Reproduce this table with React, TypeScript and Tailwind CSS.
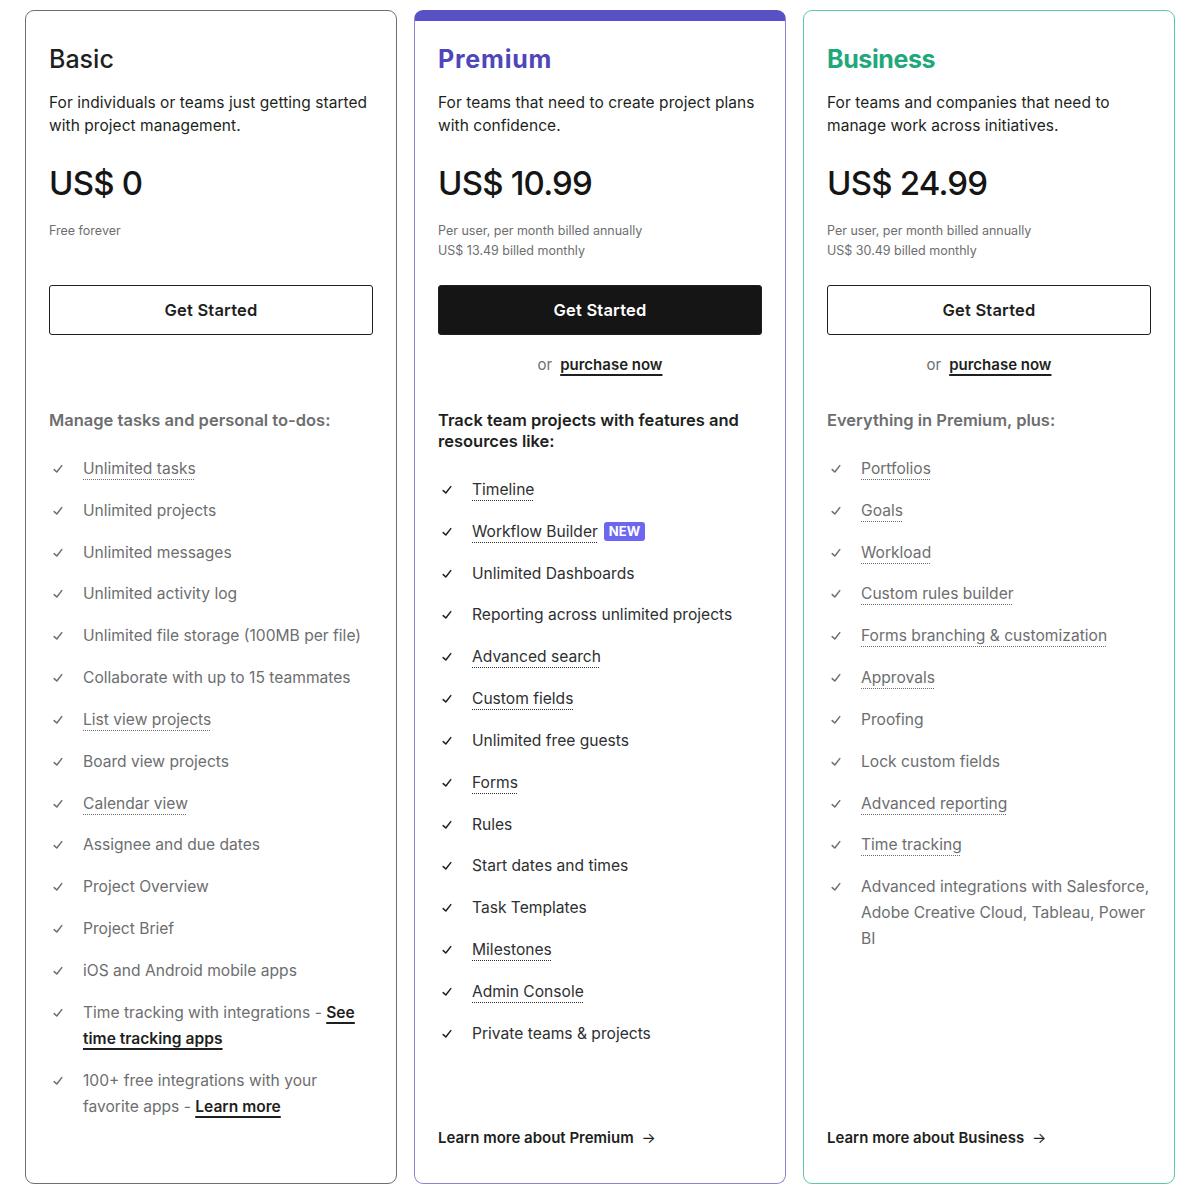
import React from "react";

type Feature = {
    text: string;
    dotted?: boolean;
    badge?: string;
    link?: string;
};

type Plan = {
    name: string;
    nameColor: string;
    description: string;
    price: string;
    notes: string[];
    primary?: boolean;
    purchase?: boolean;
    heading: string;
    features: Feature[];
    learnMore?: string;
    cardClass: string;
    textClass: string;
    headingClass: string;
};

const plans: Plan[] = [
    {
        name: "Basic",
        nameColor: "text-[#1e1f21] font-medium",
        description: "For individuals or teams just getting started with project management.",
        price: "US$ 0",
        notes: ["Free forever"],
        heading: "Manage tasks and personal to-dos:",
        cardClass: "border-[1.5px] border-[#6f6f6f] pt-[32px]",
        textClass: "text-[#6d6e6f]",
        headingClass: "text-[#6d6e6f]",
        features: [
            { text: "Unlimited tasks", dotted: true },
            { text: "Unlimited projects" },
            { text: "Unlimited messages" },
            { text: "Unlimited activity log" },
            { text: "Unlimited file storage (100MB per file)" },
            { text: "Collaborate with up to 15 teammates" },
            { text: "List view projects", dotted: true },
            { text: "Board view projects" },
            { text: "Calendar view", dotted: true },
            { text: "Assignee and due dates" },
            { text: "Project Overview" },
            { text: "Project Brief" },
            { text: "iOS and Android mobile apps" },
            { text: "Time tracking with integrations - ", link: "See time tracking apps" },
            { text: "100+ free integrations with your favorite apps - ", link: "Learn more" },
        ],
    },
    {
        name: "Premium",
        nameColor: "text-[#4f46ba] font-bold tracking-[0.8px]",
        description: "For teams that need to create project plans with confidence.",
        price: "US$ 10.99",
        notes: ["Per user, per month billed annually", "US$ 13.49 billed monthly"],
        primary: true,
        purchase: true,
        heading: "Track team projects with features and resources like:",
        learnMore: "Learn more about Premium",
        cardClass: "border-[1.5px] border-[#8a86d2] border-t-[11px] border-t-[#5a50c6] pt-[22px]",
        textClass: "text-[#2e2f31]",
        headingClass: "text-[#1e1f21]",
        features: [
            { text: "Timeline", dotted: true },
            { text: "Workflow Builder", dotted: true, badge: "NEW" },
            { text: "Unlimited Dashboards" },
            { text: "Reporting across unlimited projects" },
            { text: "Advanced search", dotted: true },
            { text: "Custom fields", dotted: true },
            { text: "Unlimited free guests" },
            { text: "Forms", dotted: true },
            { text: "Rules" },
            { text: "Start dates and times" },
            { text: "Task Templates" },
            { text: "Milestones", dotted: true },
            { text: "Admin Console", dotted: true },
            { text: "Private teams & projects" },
        ],
    },
    {
        name: "Business",
        nameColor: "text-[#1ea87b] font-bold tracking-[-0.4px]",
        description: "For teams and companies that need to manage work across initiatives.",
        price: "US$ 24.99",
        notes: ["Per user, per month billed annually", "US$ 30.49 billed monthly"],
        purchase: true,
        heading: "Everything in Premium, plus:",
        learnMore: "Learn more about Business",
        cardClass: "border-[1.5px] border-[#5ec8a6] pt-[32px]",
        textClass: "text-[#6d6e6f]",
        headingClass: "text-[#6d6e6f]",
        features: [
            { text: "Portfolios", dotted: true },
            { text: "Goals", dotted: true },
            { text: "Workload", dotted: true },
            { text: "Custom rules builder", dotted: true },
            { text: "Forms branching & customization", dotted: true },
            { text: "Approvals", dotted: true },
            { text: "Proofing" },
            { text: "Lock custom fields" },
            { text: "Advanced reporting", dotted: true },
            { text: "Time tracking", dotted: true },
            { text: "Advanced integrations with Salesforce, Adobe Creative Cloud, Tableau, Power BI" },
        ],
    },
];

const Check = ({ dark }: { dark?: boolean }) => (
    <svg width="10" height="10" viewBox="0 0 10 10" className="mt-[8px] shrink-0">
        <path
            d="M1.2 5.6 L3.8 8 L8.8 1.6"
            fill="none"
            stroke={dark ? "#1e1f21" : "#6d6e6f"}
            strokeWidth="1.5"
            strokeLinecap="round"
            strokeLinejoin="round"
        />
    </svg>
);

const PlanCard = ({ plan }: { plan: Plan }) => {
    return (
        <div className={`w-[372px] h-[1174px] rounded-[9px] bg-white flex flex-col px-[23px] pb-[34px] ${plan.cardClass}`}>
            <h2 className={`text-[25px] leading-[32px] ${plan.nameColor}`}>{plan.name}</h2>
            <p className="mt-[16px] text-[15.5px] leading-[23px] text-[#1e1f21] tracking-[0.05px]">{plan.description}</p>
            <div className="mt-[24px] text-[33px] leading-[44px] font-medium text-[#151515] tracking-[-0.8px]">
                {plan.price}
            </div>
            <div className="mt-[16px] h-[40px] text-[12.5px] leading-[20px] text-[#6d6e6f]">
                {plan.notes.map((n) => (
                    <div key={n}>{n}</div>
                ))}
            </div>
            <button
                className={`mt-[24px] h-[50px] w-full rounded-[3px] border-[1.5px] border-[#1e1f21] text-[16.5px] font-semibold tracking-[0.2px] ${
                    plan.primary ? "bg-[#151515] text-white" : "bg-white text-[#1e1f21]"
                }`}
            >
                Get Started
            </button>
            <div className="mt-[18px] h-[24px] text-[15px] leading-[24px] text-center">
                {plan.purchase && (
                    <>
                        <span className="text-[#6d6e6f] mr-2">or</span>
                        <span className="font-semibold text-[#1e1f21] underline decoration-[1.5px] underline-offset-[4px]">
                            purchase now
                        </span>
                    </>
                )}
            </div>
            <h3 className={`mt-[33px] text-[16.5px] leading-[21px] font-semibold pr-4 ${plan.headingClass}`}>
                {plan.heading}
            </h3>
            <ul className="mt-[25px] flex flex-col gap-[15.84px]">
                {plan.features.map((f) => (
                    <li key={f.text} className={`flex gap-[20px] pl-[4px] text-[15.6px] leading-[26px] ${plan.textClass}`}>
                        <Check dark={plan.primary} />
                        <span>
                            <span
                                className={
                                    f.dotted ? "underline decoration-dotted decoration-[1px] underline-offset-[5px]" : ""
                                }
                            >
                                {f.text}
                            </span>
                            {f.link && (
                                <span className="font-semibold text-[#1e1f21] underline decoration-[1.5px] underline-offset-[4px]">
                                    {f.link}
                                </span>
                            )}
                            {f.badge && (
                                <span className="ml-[6px] inline-block rounded-[3px] bg-[#6d66f0] px-[5px] text-[13px] leading-[19px] font-bold text-white align-[1px]">
                                    {f.badge}
                                </span>
                            )}
                        </span>
                    </li>
                ))}
            </ul>
            {plan.learnMore && (
                <div className="mt-auto text-[15px] leading-[22px] font-semibold text-[#1e1f21]">
                    {plan.learnMore} <span className="font-normal ml-1">→</span>
                </div>
            )}
        </div>
    );
};

export default function App() {
    return (
        <div className="min-h-[1200px] bg-white pt-[10px] pl-[25px] font-['Inter','Liberation_Sans',sans-serif]">
            <div className="flex gap-[17px]">
                {plans.map((p) => (
                    <PlanCard key={p.name} plan={p} />
                ))}
            </div>
        </div>
    );
}
